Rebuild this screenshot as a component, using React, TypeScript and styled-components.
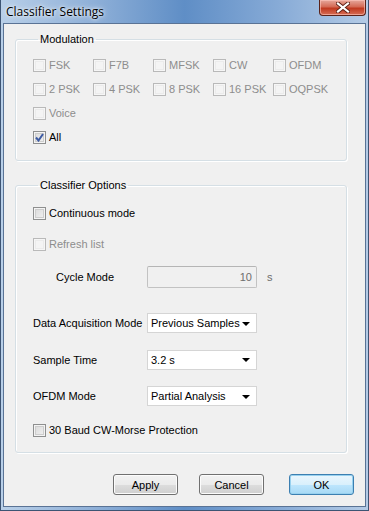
import React from "react";
import styled, { createGlobalStyle } from "styled-components";

const GlobalStyle = createGlobalStyle`
  html, body {
    margin: 0;
    padding: 0;
    width: 369px;
    height: 511px;
    overflow: hidden;
    background: #8eb0d8;
  }
  * {
    box-sizing: border-box;
  }
`;

const Window = styled.div`
  width: 369px;
  height: 511px;
  display: flex;
  flex-direction: column;
  padding: 0 2px 3px 2px;
  border: 1px solid #3d5473;
  border-top: none;
  background: linear-gradient(90deg, #b8cfe8 0%, #8fb0d8 25%, #5f8ec6 50%, #86aad6 75%, #b4cbe6 100%);
  font-family: "Liberation Sans", Arial, sans-serif;
  font-size: 11px;
  color: #000;
`;

const TitleBar = styled.div`
  height: 23px;
  flex: none;
  display: flex;
  align-items: flex-start;
  justify-content: space-between;
`;

const Title = styled.div`
  font-family: "Open Sans", "Noto Sans", sans-serif;
  font-size: 12px;
  line-height: 12px;
  padding: 6px 0 0 3px;
  color: #000;
  text-shadow: 0 0 6px rgba(255, 255, 255, 0.9), 0 0 3px rgba(255, 255, 255, 0.9);
`;

const CloseButton = styled.div`
  width: 47px;
  height: 16px;
  margin-right: 0;
  border: 1px solid #5a2219;
  border-top: none;
  border-radius: 0 0 4px 4px;
  background: linear-gradient(180deg, #e6a89c 0%, #d46a55 45%, #c0391f 55%, #d66e56 100%);
  box-shadow: inset 0 0 0 1px rgba(255, 200, 190, 0.6);
  display: flex;
  align-items: center;
  justify-content: center;
`;

const Client = styled.div`
  flex: 1;
  background: #f0f0f0;
  border: 1px solid #5a7395;
  display: flex;
  flex-direction: column;
  padding: 9px 0 0 11px;
`;

const Group = styled.fieldset<{ $height: number }>`
  width: 332px;
  height: ${(p) => p.$height}px;
  margin: 0;
  padding: 0 0 0 17px;
  border: 1px solid #d5dfe5;
  border-radius: 3px;
  box-shadow: inset 1px 1px 0 #fff, 1px 1px 0 #fff;
`;

const Legend = styled.legend`
  margin-left: 5px;
  padding: 0 2px;
  line-height: 13px;
  font-size: 11px;
`;

const ModGrid = styled.div`
  display: grid;
  grid-template-columns: repeat(5, 60px);
  grid-auto-rows: 24px;
  margin-top: 7px;
`;

const Check = styled.label<{ $disabled?: boolean }>`
  display: flex;
  align-items: center;
  gap: 3px;
  white-space: nowrap;
  color: ${(p) => (p.$disabled ? "#8d8d8d" : "#000")};
`;

const Box = styled.span<{ $disabled?: boolean }>`
  width: 13px;
  height: 13px;
  flex: none;
  border: 1px solid ${(p) => (p.$disabled ? "#b9b9b9" : "#8e8f8f")};
  background: ${(p) =>
    p.$disabled
      ? "#f4f4f4"
      : "linear-gradient(135deg, #d8d8d8 0%, #f3f3f3 100%)"};
  box-shadow: inset 0 0 0 1px ${(p) => (p.$disabled ? "#f6f6f6" : "#f4f4f4")},
    inset 0 0 0 2px ${(p) => (p.$disabled ? "#ebebeb" : "#cdcdcd")};
  display: flex;
  align-items: center;
  justify-content: center;
`;

const OptRow = styled.div<{ $h: number; $indent?: number }>`
  height: ${(p) => p.$h}px;
  display: flex;
  align-items: center;
  padding-left: ${(p) => p.$indent || 0}px;
`;

const FieldLabel = styled.span<{ $w: number }>`
  width: ${(p) => p.$w}px;
  flex: none;
`;

const NumberBox = styled.div`
  width: 110px;
  height: 22px;
  border: 1px solid #c2c2c2;
  border-top-color: #b5b5b5;
  border-radius: 2px;
  background: #f0f0f0;
  color: #6d6d6d;
  display: flex;
  align-items: center;
  justify-content: flex-end;
  padding-right: 4px;
`;

const Unit = styled.span`
  margin-left: 10px;
  color: #6d6d6d;
`;

const Select = styled.div`
  width: 110px;
  height: 20px;
  border: 1px solid #d5d5d5;
  background: #fff;
  display: flex;
  align-items: center;
  justify-content: space-between;
  padding: 0 6px 0 3px;
`;

const Arrow = styled.span`
  width: 0;
  height: 0;
  border-left: 4px solid transparent;
  border-right: 4px solid transparent;
  border-top: 4px solid #000;
  margin-top: 1px;
`;

const Buttons = styled.div`
  display: flex;
  justify-content: flex-end;
  gap: 21px;
  padding: 21px 11px 0 0;
`;

const Button = styled.div<{ $default?: boolean }>`
  width: 65px;
  height: 21px;
  border: 1px solid ${(p) => (p.$default ? "#3c7fb1" : "#707070")};
  border-radius: 3px;
  background: ${(p) =>
    p.$default
      ? "linear-gradient(180deg, #eaf6fd 0%, #d9f0fc 50%, #bee6fd 51%, #a7d9f5 100%)"
      : "linear-gradient(180deg, #f2f2f2 0%, #ebebeb 50%, #dddddd 51%, #cfcfcf 100%)"};
  box-shadow: inset 0 0 0 1px ${(p) => (p.$default ? "#98d1ef" : "#fcfcfc")};
  display: flex;
  align-items: center;
  justify-content: center;
  &:last-child {
    margin-left: 4px;
  }
`;

const CheckMark = () => (
  <svg width="9" height="9" viewBox="0 0 9 9">
    <path d="M1 4.5 L3.5 7.5 L8 1" fill="none" stroke="#3d5ba3" strokeWidth="2" />
  </svg>
);

const CloseX = () => (
  <svg width="14" height="11" viewBox="0 0 14 11">
    <path d="M2 1.5 L12 9.5 M12 1.5 L2 9.5" stroke="#5b1e14" strokeWidth="4" strokeLinecap="square" />
    <path d="M2 1.5 L12 9.5 M12 1.5 L2 9.5" stroke="#fff" strokeWidth="2.2" strokeLinecap="square" />
  </svg>
);

const modulations = [
  "FSK", "F7B", "MFSK", "CW", "OFDM",
  "2 PSK", "4 PSK", "8 PSK", "16 PSK", "OQPSK",
  "Voice",
];

const CheckItem = ({ label, disabled, checked }: { label: string; disabled?: boolean; checked?: boolean }) => (
  <Check $disabled={disabled}>
    <Box $disabled={disabled}>{checked && <CheckMark />}</Box>
    {label}
  </Check>
);

const App = () => {
  return (
    <>
      <GlobalStyle />
      <Window>
        <TitleBar>
          <Title>Classifier Settings</Title>
          <CloseButton>
            <CloseX />
          </CloseButton>
        </TitleBar>
        <Client>
          <Group $height={128}>
            <Legend>Modulation</Legend>
            <ModGrid>
              {modulations.map((m) => (
                <CheckItem key={m} label={m} disabled />
              ))}
            </ModGrid>
            <ModGrid style={{ marginTop: 0 }}>
              <CheckItem label="All" checked />
            </ModGrid>
          </Group>
          <Group $height={274} style={{ marginTop: 18 }}>
            <Legend>Classifier Options</Legend>
            <OptRow $h={30} style={{ marginTop: 6 }}>
              <CheckItem label="Continuous mode" />
            </OptRow>
            <OptRow $h={32}>
              <CheckItem label="Refresh list" disabled />
            </OptRow>
            <OptRow $h={33} $indent={23}>
              <FieldLabel $w={91}>Cycle Mode</FieldLabel>
              <NumberBox>10</NumberBox>
              <Unit>s</Unit>
            </OptRow>
            <OptRow $h={36} style={{ marginTop: 12 }}>
              <FieldLabel $w={114}>Data Acquisition Mode</FieldLabel>
              <Select>
                Previous Samples
                <Arrow />
              </Select>
            </OptRow>
            <OptRow $h={37}>
              <FieldLabel $w={114}>Sample Time</FieldLabel>
              <Select>
                3.2 s
                <Arrow />
              </Select>
            </OptRow>
            <OptRow $h={36}>
              <FieldLabel $w={114}>OFDM Mode</FieldLabel>
              <Select>
                Partial Analysis
                <Arrow />
              </Select>
            </OptRow>
            <OptRow $h={32}>
              <CheckItem label="30 Baud CW-Morse Protection" />
            </OptRow>
          </Group>
          <Buttons>
            <Button>Apply</Button>
            <Button>Cancel</Button>
            <Button $default>OK</Button>
          </Buttons>
        </Client>
      </Window>
    </>
  );
};

export default App;
